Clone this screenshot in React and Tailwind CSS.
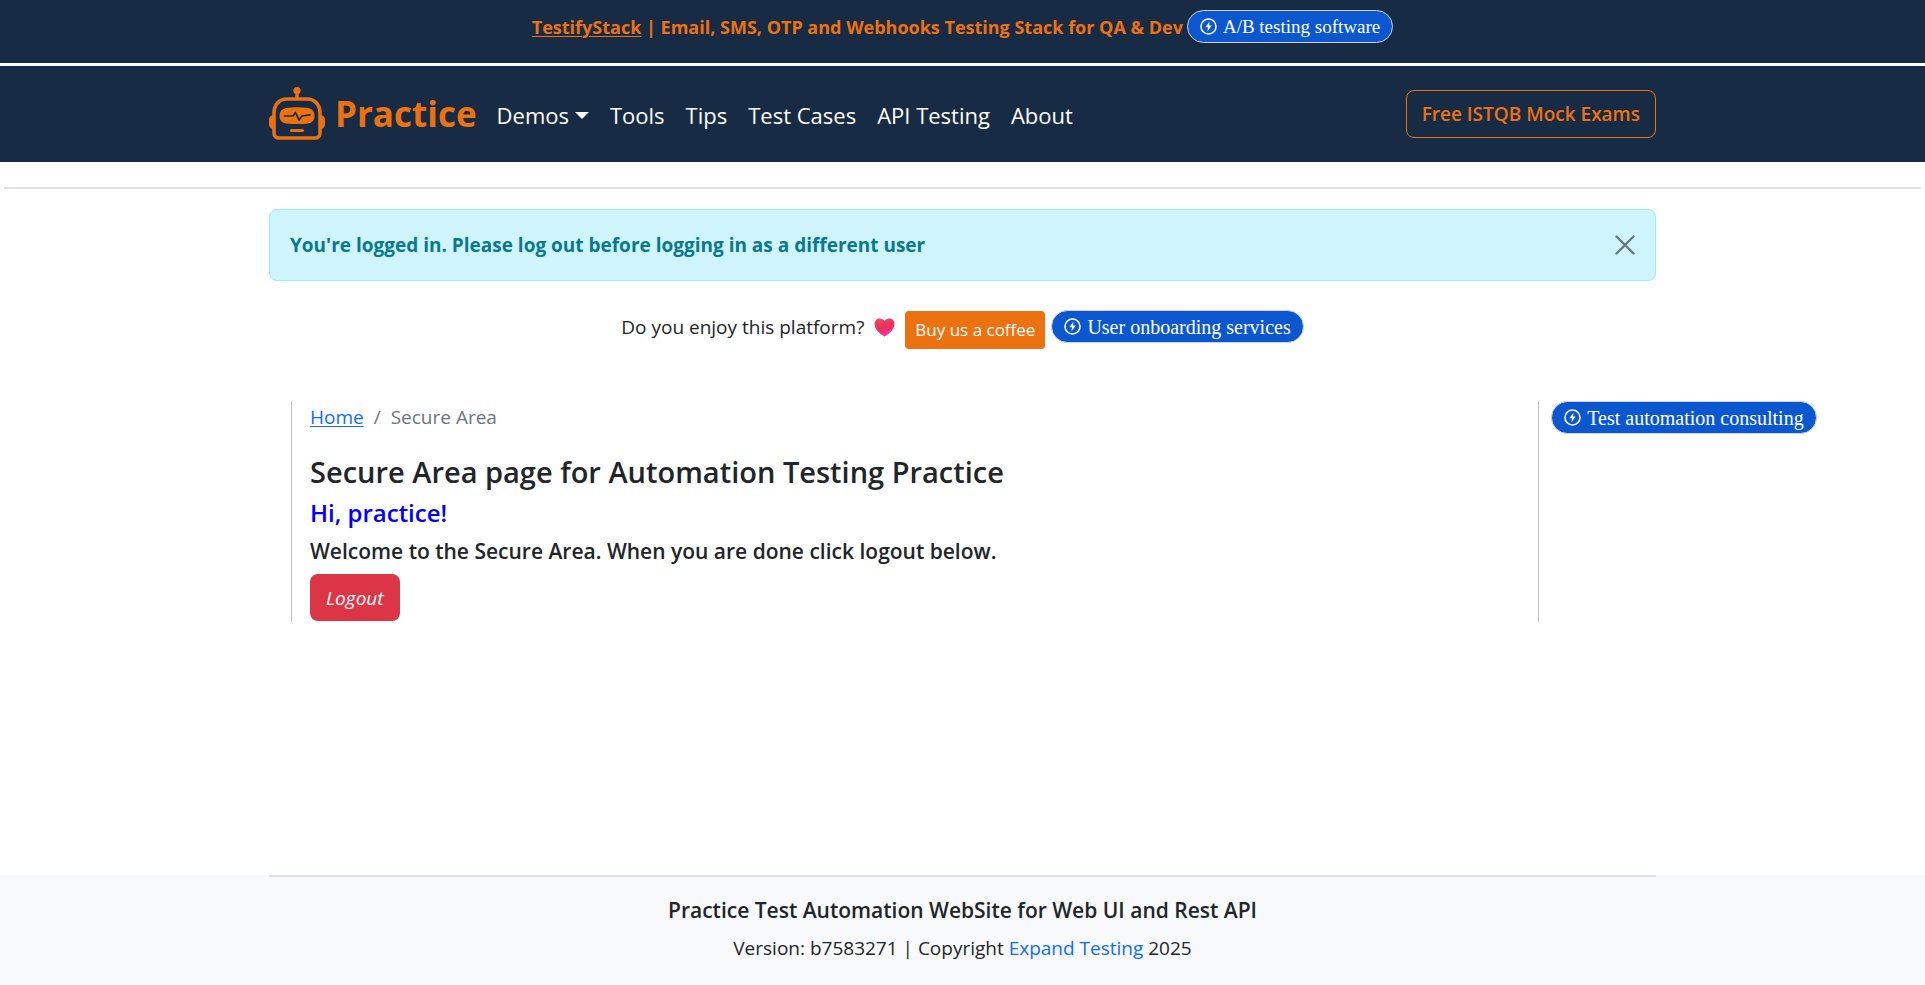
import React from "react";

const navLinks = ["Tools", "Tips", "Test Cases", "API Testing", "About"];

function RobotLogo() {
  return (
    <svg width="56" height="54" viewBox="0 0 56 54" fill="none" aria-hidden="true">
      <circle cx="28" cy="3.600" r="3.600" fill="#ec7211" />
      <path d="M28 5V12" stroke="#ec7211" strokeWidth="3.400" />
      <path
        d="M18 12H38C46 12 51 18 51 26V46C51 49 49 51 46 51H10C7 51 5 49 5 46V26C5 18 10 12 18 12Z"
        stroke="#ec7211"
        strokeWidth="3.600"
      />
      <path d="M5 28C2 28 0 30 0 33V37C0 40 2 42 5 42Z" fill="#ec7211" />
      <path d="M51 28C54 28 56 30 56 33V37C56 40 54 42 51 42Z" fill="#ec7211" />
      <path
        d="M17 21Q28 19.500 39 21Q45.500 22 45.500 29Q45.500 35.500 39 36.500Q28 37.500 17 36.500Q10.500 35.500 10.500 29Q10.500 22 17 21Z"
        fill="#ec7211"
      />
      <path
        d="M15.500 29H24L26.500 25.500L30 33L33 29L41 27.800"
        stroke="#182b44"
        strokeWidth="1.700"
        strokeLinecap="round"
        strokeLinejoin="round"
      />
      <path d="M22.500 43.500H33.500" stroke="#ec7211" strokeWidth="3.200" strokeLinecap="round" />
    </svg>
  );
}

function Heart() {
  return (
    <svg width="21" height="19" viewBox="0 0 21 19" role="img" aria-label="heart">
      <defs>
        <linearGradient id="heart" x1="0.300" y1="0" x2="0.600" y2="1">
          <stop offset="0" stopColor="#f5475f" />
          <stop offset="0.500" stopColor="#e8305c" />
          <stop offset="1" stopColor="#ff2fb0" />
        </linearGradient>
      </defs>
      <path
        d="M10.500 3C12 1 13.800 .5 15.500 .5C18.500 .5 20.500 3 20.500 6C20.500 11 15 16 10.500 18.500C6 16 .5 11 .5 6C.5 3 2.500 .5 5.500 .5C7.500 .5 9.500 1.500 10.500 3Z"
        fill="url(#heart)"
      />
    </svg>
  );
}

function PromoPill({ children, textSize = "text-[20px]" }) {
  return (
    <a
      href="#"
      className={`inline-flex h-[33px] shrink-0 items-center gap-1.5 rounded-full border border-[#d3d3d3] bg-[#0b57d0] px-3 font-['Liberation_Serif',serif] leading-none font-normal whitespace-nowrap text-white ${textSize}`}
    >
      <svg width="17" height="17" viewBox="0 0 17 17" fill="none" aria-hidden="true">
        <circle cx="8.500" cy="8.500" r="7.500" stroke="white" strokeWidth="1.600" />
        <path d="M9.600 3.500L5.300 9.300H8L7.400 13.500L11.700 7.600H9Z" fill="white" />
      </svg>
      {children}
    </a>
  );
}

export default function App() {
  return (
    <div className="flex min-h-screen flex-col overflow-x-hidden bg-white font-['Open_Sans','Noto_Sans',sans-serif] text-[19px] leading-[30px] text-[#212529]">
      <div className="flex h-[63px] items-start justify-center gap-1 bg-[#182b44] pt-2.5 text-[18px] font-bold text-[#ec7211]">
        <p className="pt-0.5">
          <a href="#" className="underline decoration-1 underline-offset-2">TestifyStack</a> | Email, SMS, OTP and Webhooks Testing Stack for QA &amp; Dev
        </p>
        <PromoPill textSize="text-[19px]">A/B testing software</PromoPill>
      </div>

      <header className="mt-[3px] bg-[#182b44]">
        <nav className="mx-auto flex h-24 max-w-[1387px] items-center">
          <a href="#" className="flex items-center gap-2.5 text-[35px] font-bold text-[#ec7211]">
            <RobotLogo />
            Practice
          </a>
          <div className="ml-5 flex items-center gap-[21px] pt-0.5 text-[22px] text-white">
            <button type="button" className="flex items-center gap-1.5">
              Demos
              <svg width="14" height="7" viewBox="0 0 14 7" fill="currentColor" aria-hidden="true">
                <path d="M0 0H14L7 7Z" />
              </svg>
            </button>
            {navLinks.map((label) => (
              <a key={label} href="#">{label}</a>
            ))}
          </div>
          <a href="#" className="ml-auto flex h-12 items-center rounded-lg border border-[#ec7211] px-[15px] font-semibold text-[#ec7211]">
            Free ISTQB Mock Exams
          </a>
        </nav>
      </header>

      <hr className="mx-1 mt-[25px] border-t-2 border-[#dee2e6]" />

      <main className="mx-auto w-full max-w-[1387px]">
        <div role="alert" className="mt-5 flex h-[72px] items-center justify-between rounded-lg border border-[#9eeaf9] bg-[#cff4fc] px-5 text-[#087990]">
          <strong className="font-bold">You're logged in. Please log out before logging in as a different user</strong>
          <button type="button" aria-label="Close" className="text-[#67797d]">
            <svg width="20" height="20" viewBox="0 0 20 20" stroke="currentColor" strokeWidth="2.400" strokeLinecap="round" aria-hidden="true">
              <path d="M1.500 1.500L18.500 18.500M18.500 1.500L1.500 18.500" />
            </svg>
          </button>
        </div>

        <div className="mt-[29px] flex items-start justify-center">
          <span className="mt-0.5 mr-2.5">Do you enjoy this platform?</span>
          <span className="mt-2 mr-2.5"><Heart /></span>
          <a href="#" className="mt-px mr-1.5 flex h-[38px] items-center rounded bg-[#ec7211] px-2.5 text-[17px] text-white">Buy us a coffee</a>
          <PromoPill>User onboarding services</PromoPill>
        </div>

        <div className="mt-[52px] flex items-start gap-3">
          <section className="ml-[22px] h-[221px] w-[90%] shrink-0 border-x border-[#c0c0c0] pl-[18px]">
            <nav aria-label="Breadcrumb" className="flex gap-2.5 pt-px text-[#6c757d]">
              <a href="#" className="text-[#0d6efd] underline underline-offset-2">Home</a>
              <span>/</span>
              <span>Secure Area</span>
            </nav>
            <h1 className="mt-[22px] text-[29px] leading-9 font-semibold">Secure Area page for Automation Testing Practice</h1>
            <h2 className="mt-2 text-[24px] leading-[30px] font-semibold text-[#0000ff]">Hi, practice!</h2>
            <h3 className="mt-2 text-[21px] leading-[30px] font-semibold">Welcome to the Secure Area. When you are done click logout below.</h3>
            <button type="button" className="mt-2 flex h-[47px] items-center rounded-lg bg-[#dc3545] px-4 text-white italic">Logout</button>
          </section>
          <PromoPill>Test automation consulting</PromoPill>
        </div>
      </main>

      <footer className="mt-auto bg-[#f8f9fa] text-center">
        <div className="mx-auto h-[110px] max-w-[1387px] border-t-2 border-[#dee2e6] pt-[18px]">
          <h4 className="text-[21px] font-semibold">Practice Test Automation WebSite for Web UI and Rest API</h4>
          <p className="mt-2">
            Version: b7583271 | Copyright <a href="#" className="text-[#0d6efd]">Expand Testing</a> 2025
          </p>
        </div>
      </footer>
    </div>
  );
}
